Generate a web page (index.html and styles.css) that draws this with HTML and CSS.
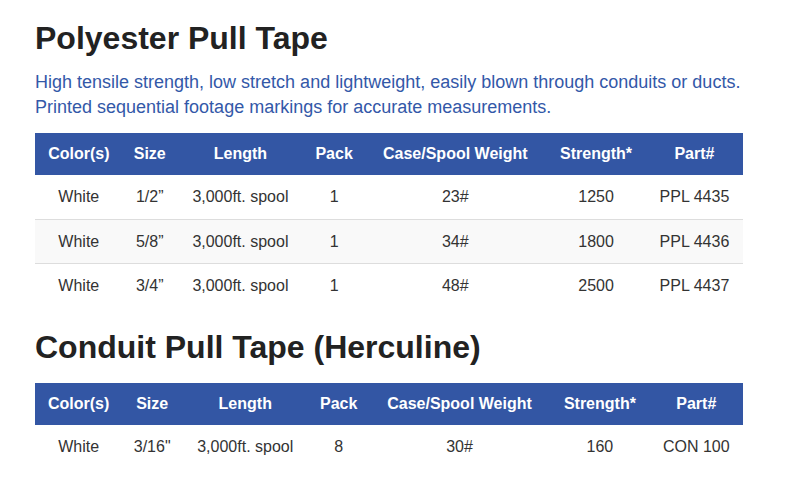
FILE: index.html
```html
<!DOCTYPE html>
<html>
<head>
<meta charset="utf-8">
<link rel="stylesheet" href="styles.css">
</head>
<body>
<div class="page">
  <h2 class="title">Polyester Pull Tape</h2>
  <p class="lead">High tensile strength, low stretch and lightweight, easily blown through conduits or ducts.<br>Printed sequential footage markings for accurate measurements.</p>
  <table class="spec">
    <thead>
      <tr><th>Color(s)</th><th>Size</th><th>Length</th><th>Pack</th><th>Case/Spool Weight</th><th>Strength*</th><th>Part#</th></tr>
    </thead>
    <tbody>
      <tr><td>White</td><td>1/2”</td><td>3,000ft. spool</td><td>1</td><td>23#</td><td>1250</td><td>PPL 4435</td></tr>
      <tr><td>White</td><td>5/8”</td><td>3,000ft. spool</td><td>1</td><td>34#</td><td>1800</td><td>PPL 4436</td></tr>
      <tr><td>White</td><td>3/4”</td><td>3,000ft. spool</td><td>1</td><td>48#</td><td>2500</td><td>PPL 4437</td></tr>
    </tbody>
  </table>
  <h2 class="title second">Conduit Pull Tape (Herculine)</h2>
  <table class="spec">
    <thead>
      <tr><th>Color(s)</th><th>Size</th><th>Length</th><th>Pack</th><th>Case/Spool Weight</th><th>Strength*</th><th>Part#</th></tr>
    </thead>
    <tbody>
      <tr><td>White</td><td>3/16"</td><td>3,000ft. spool</td><td>8</td><td>30#</td><td>160</td><td>CON 100</td></tr>
    </tbody>
  </table>
</div>
</body>
</html>
```
FILE: styles.css
```css
html, body {
  margin: 0;
  padding: 0;
  background: #fff;
}
body {
  font-family: "Liberation Sans", Arial, sans-serif;
  color: #333;
}
.page {
  padding: 18px 53px 0 35px;
}
.title {
  margin: 0;
  font-size: 32px;
  line-height: 40px;
  font-weight: bold;
  color: #222;
}
.title.second {
  margin-top: 20px;
  margin-bottom: 16px;
}
.lead {
  margin: 12px 0 13px;
  font-size: 18px;
  line-height: 25px;
  color: #3358a8;
}
.spec {
  width: 708px;
  border-collapse: collapse;
  font-size: 16px;
}
.spec th {
  background: #3356a4;
  color: #fff;
  font-weight: bold;
  height: 42px;
  padding: 0 8px;
  text-align: center;
}
.spec td {
  height: 43px;
  padding: 0 8px;
  text-align: center;
  color: #333;
  border-top: 1px solid #ddd;
}
.spec tbody tr:first-child td {
  border-top: none;
  height: 44px;
}
.spec tbody tr:nth-child(2) td {
  background: #f9f9f9;
}
```
